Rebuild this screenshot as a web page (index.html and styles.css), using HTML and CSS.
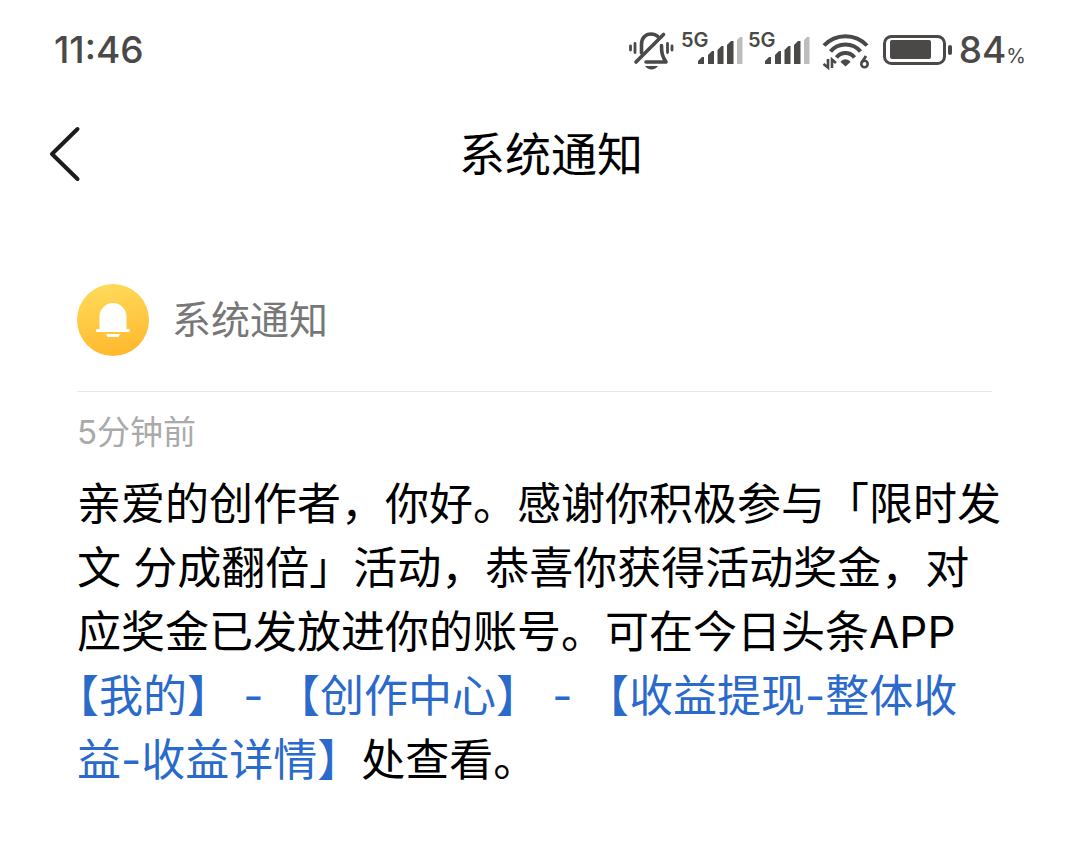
FILE: index.html
```
<!DOCTYPE html>
<html lang="zh-CN">
<head>
<meta charset="utf-8">
<meta name="viewport" content="width=device-width, initial-scale=1">
<title>系统通知</title>
<link rel="stylesheet" href="styles.css">
</head>
<body>
<div class="status-bar">
  <time class="clock">11:46</time>
  <div class="indicators">
    <svg class="mute" width="46" height="42" viewBox="0 0 46 42" fill="none" stroke="#4a4948" stroke-width="3.600" stroke-linecap="round" stroke-linejoin="round" aria-label="静音">
      <path d="M1.500 17v4M6 14.500v9M38.500 14.500v9M43 17v4" stroke-width="2.800"/>
      <path d="M12.500 24v-8.500C12.500 9 16.500 5 22 5c2.800 0 5 .8 6.800 2.500"/>
      <path d="M32.500 16.500c0 7 .5 10.500 4.500 16.500H17"/>
      <path d="M34.500 5.500 7 33"/>
      <path d="M16 37h13c-1.500 2.200-3.800 3.400-6.500 3.400S17.500 39.200 16 37z" fill="#4a4948" stroke="none"/>
    </svg>
    <svg class="signal" width="62" height="42" viewBox="0 0 62 42" fill="#4a4948" aria-label="5G">
      <text class="network" x="0" y="18">5G</text>
      <path d="M17 35v-3l4-4h2v7zM27 35v-9l4-4h2v13zM36.500 35V21l4-4h2v18zM46 35V16l4-4h2.500v23z"/>
      <path d="M56 35V11l3-3h2.500v27z" fill="#bdbdbd"/>
    </svg>
    <svg class="signal" width="62" height="42" viewBox="0 0 62 42" fill="#4a4948" aria-label="5G">
      <text class="network" x="0" y="18">5G</text>
      <path d="M17 35v-3l4-4h2v7zM27 35v-9l4-4h2v13zM36.500 35V21l4-4h2v18zM46 35V16l4-4h2.500v23z"/>
      <path d="M56 35V11l3-3h2.500v27z" fill="#bdbdbd"/>
    </svg>
    <svg class="wifi" width="48" height="42" viewBox="0 0 48 42" fill="none" stroke="#4a4948" aria-label="Wi-Fi 6">
      <path d="M2 16.500C13.500 4 33.500 4 45 16.500M8.500 22.500C16 13 31 13 38.500 22.500M14.500 28.500C19 22.500 28 22.500 32.500 28.500" stroke-width="4"/>
      <path d="M23.500 37.500l-5-4.500c2.500-3.600 7.500-3.600 10 0z" fill="#4a4948" stroke="none"/>
      <path d="M6 30v8.500L1.500 35M10 39v-8.500l4 3.500" stroke-width="2.600"/>
      <path d="M44 27l-4.300 6.500" stroke-width="2.800"/>
      <circle cx="42.500" cy="35" r="3.200" stroke-width="2.600"/>
    </svg>
    <svg class="battery" width="70" height="42" viewBox="0 0 70 42" fill="none" aria-label="电量">
      <rect x="1.500" y="7.500" width="60" height="27" rx="7" stroke="#4a4948" stroke-width="3"/>
      <rect x="7" y="11" width="41" height="19" rx="2" fill="#4a4948"/>
      <rect x="65" y="16" width="4" height="10" rx="2" fill="#4a4948"/>
    </svg>
    <span class="level">84<small class="percent">%</small></span>
  </div>
</div>

<header class="title-bar">
  <button class="back" type="button" aria-label="返回">
    <svg width="32" height="56" viewBox="0 0 32 56" fill="none" stroke="#1c1c1e" stroke-width="4" stroke-linecap="round" stroke-linejoin="round"><path d="M28.500 3 3 28l25.500 25"/></svg>
  </button>
  <h1 class="title">系统通知</h1>
</header>

<main class="notice">
  <div class="sender">
    <svg class="avatar" width="72" height="72" viewBox="0 0 72 72" aria-hidden="true">
      <defs><linearGradient id="gold" x1=".4" y1="0" x2=".6" y2="1"><stop offset="0" stop-color="#ffda5a"/><stop offset="1" stop-color="#ffb82c"/></linearGradient></defs>
      <circle cx="36" cy="36" r="36" fill="url(#gold)"/>
      <path d="M22.500 45V32.500a13.500 13.500 0 0 1 27 0V45h3.300v3H19.200v-3z" fill="#fff"/>
      <path d="M29 50h14l-1.500 3h-11z" fill="#fff"/>
    </svg>
    <h2 class="name">系统通知</h2>
  </div>
  <time class="ago">5分钟前</time>
  <p class="message">亲爱的创作者，你好。感谢你积极参与「限时发文 分成翻倍」活动，恭喜你获得活动奖金，对应奖金已发放进你的账号。可在今日头条APP<br><a class="path" href="#income">【我的】 - 【创作中心】 - 【收益提现-整体收<br>益-收益详情】</a>处查看。</p>
</main>
</body>
</html>
```
FILE: styles.css
```
* {
  box-sizing: border-box;
}

body {
  margin: 0;
  background: #fff;
  color: #000;
  font-family: Inter, "Noto Sans CJK SC", sans-serif;
}

.status-bar {
  display: flex;
  align-items: center;
  justify-content: space-between;
  padding: 28px 54px 0;
  color: #4a4948;
  font-size: 37px;
  font-weight: 500;
  line-height: 44px;
}

.indicators {
  display: flex;
  align-items: center;
}

.mute {
  margin-right: 6px;
}

.signal {
  margin-right: 5px;
}

.network {
  font-size: 20px;
  font-weight: 600;
}

.wifi {
  margin: 0 13px 0 7px;
}

.level {
  display: flex;
  align-items: baseline;
  margin-left: 6px;
}

.percent {
  font-size: 20px;
  font-weight: 400;
  line-height: 24px;
}

.title-bar {
  display: flex;
  align-items: center;
  padding: 52px 80px 0 49px;
}

.back {
  display: flex;
  width: 53px;
  padding: 0;
  border: 0;
  background: none;
  cursor: pointer;
}

.title {
  flex: 1;
  margin: 0;
  font-size: 46px;
  font-weight: 400;
  line-height: 60px;
  text-align: center;
}

.notice {
  padding: 100px 77px 40px;
}

.sender {
  display: flex;
  align-items: center;
  gap: 23px;
  margin-right: 11px;
  padding-bottom: 35px;
  border-bottom: 1px solid #e8e8e8;
}

.name {
  margin: 0;
  color: #777;
  font-size: 39px;
  font-weight: 400;
  line-height: 52px;
}

.ago {
  display: block;
  padding-top: 16px;
  color: #aaa;
  font-size: 33px;
  line-height: 48px;
}

.message {
  margin: 16px 0 0;
  font-size: 44px;
  line-height: 64px;
  text-spacing-trim: trim-start;
}

.path {
  color: #2a6acb;
  text-decoration: none;
}
```
